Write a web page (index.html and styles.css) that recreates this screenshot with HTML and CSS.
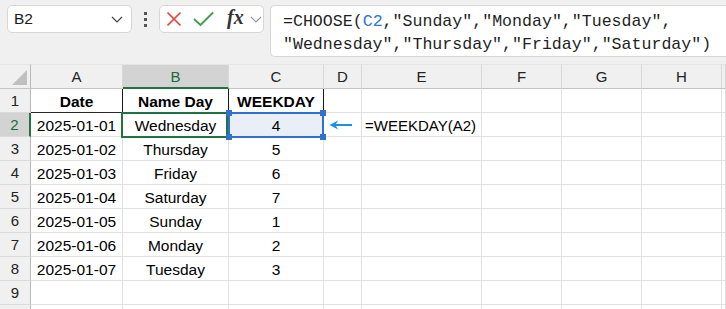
FILE: index.html
```html
<!DOCTYPE html>
<html lang="en">
<head>
  <meta charset="UTF-8">
  <title>CHOOSE weekday</title>
  <link rel="stylesheet" href="styles.css">
</head>
<body>
  <div class="toolbar">
    <div class="namebox">
      <span>B2</span>
      <svg class="chev" width="12" height="7" viewBox="0 0 12 7"><polyline points="1,1 6,6 11,1" fill="none" stroke="#444" stroke-width="1.2"/></svg>
    </div>
    <div class="dots"><i></i><i></i><i></i></div>
    <div class="fxbox">
      <svg width="16" height="16" viewBox="0 0 16 16"><path d="M1.5 1.5 L14.5 14.5 M14.5 1.5 L1.5 14.5" stroke="#e8413a" stroke-width="1.7" fill="none"/></svg>
      <svg width="21" height="16" viewBox="0 0 21 16"><polyline points="1,8 7.5,14 20,1.5" stroke="#3a9d4f" stroke-width="1.8" fill="none"/></svg>
      <span class="fx">fx</span>
      <svg width="12" height="7" viewBox="0 0 12 7"><polyline points="1,1 6,6 11,1" fill="none" stroke="#9a9a9a" stroke-width="1.2"/></svg>
    </div>
    <div class="formula">=CHOOSE(<span class="ref">C2</span>,"Sunday","Monday","Tuesday",<br>"Wednesday","Thursday","Friday","Saturday")</div>
  </div>

  <div class="sheet">
    <div class="grid">
      <div class="hd corner"><span class="tri"></span></div>
      <div class="hd">A</div>
      <div class="hd sel">B</div>
      <div class="hd">C</div>
      <div class="hd">D</div>
      <div class="hd">E</div>
      <div class="hd">F</div>
      <div class="hd">G</div>
      <div class="hd">H</div>
      <div class="hd"></div>

      <div class="rh">1</div>
      <div class="c th">Date</div>
      <div class="c th">Name Day</div>
      <div class="c th">WEEKDAY</div>
      <div class="c"></div><div class="c"></div><div class="c"></div><div class="c"></div><div class="c"></div><div class="c"></div>

      <div class="rh sel">2</div>
      <div class="c">2025-01-01</div>
      <div class="c">Wednesday</div>
      <div class="c range">4</div>
      <div class="c arrow">
        <svg width="24" height="12" viewBox="0 0 24 12"><path d="M0.5 6 L9 1.5 L7 5 L23 5 L23 7 L7 7 L9 10.5 Z" fill="#1b8fe6"/></svg>
      </div>
      <div class="c note">=WEEKDAY(A2)</div>
      <div class="c"></div><div class="c"></div><div class="c"></div><div class="c"></div>

      <div class="rh">3</div>
      <div class="c">2025-01-02</div><div class="c">Thursday</div><div class="c">5</div>
      <div class="c"></div><div class="c"></div><div class="c"></div><div class="c"></div><div class="c"></div><div class="c"></div>

      <div class="rh">4</div>
      <div class="c">2025-01-03</div><div class="c">Friday</div><div class="c">6</div>
      <div class="c"></div><div class="c"></div><div class="c"></div><div class="c"></div><div class="c"></div><div class="c"></div>

      <div class="rh">5</div>
      <div class="c">2025-01-04</div><div class="c">Saturday</div><div class="c">7</div>
      <div class="c"></div><div class="c"></div><div class="c"></div><div class="c"></div><div class="c"></div><div class="c"></div>

      <div class="rh">6</div>
      <div class="c">2025-01-05</div><div class="c">Sunday</div><div class="c">1</div>
      <div class="c"></div><div class="c"></div><div class="c"></div><div class="c"></div><div class="c"></div><div class="c"></div>

      <div class="rh">7</div>
      <div class="c">2025-01-06</div><div class="c">Monday</div><div class="c">2</div>
      <div class="c"></div><div class="c"></div><div class="c"></div><div class="c"></div><div class="c"></div><div class="c"></div>

      <div class="rh">8</div>
      <div class="c">2025-01-07</div><div class="c">Tuesday</div><div class="c">3</div>
      <div class="c"></div><div class="c"></div><div class="c"></div><div class="c"></div><div class="c"></div><div class="c"></div>

      <div class="rh">9</div>
      <div class="c"></div><div class="c"></div><div class="c"></div>
      <div class="c"></div><div class="c"></div><div class="c"></div><div class="c"></div><div class="c"></div><div class="c"></div>

      <div class="rh"></div>
      <div class="c"></div><div class="c"></div><div class="c"></div>
      <div class="c"></div><div class="c"></div><div class="c"></div><div class="c"></div><div class="c"></div><div class="c"></div>
    </div>

    <!-- active cell and the referenced range sit over the grid -->
    <div class="active-cell"></div>
    <div class="ref-box">
      <i class="h tl"></i><i class="h tr"></i><i class="h bl"></i><i class="h br"></i>
    </div>
  </div>
</body>
</html>
```

FILE: styles.css
```css
html, body {
  margin: 0;
  padding: 0;
  background: #f0f0f0;
  font-family: 'Liberation Sans', Arial, sans-serif;
  color: #000;
  overflow: hidden;
}

.toolbar {
  height: 64px;
  display: flex;
  align-items: flex-start;
  padding: 5px 0 0 7px;
  box-sizing: border-box;
}

.namebox {
  width: 125px;
  height: 28px;
  box-sizing: border-box;
  background: #fff;
  border: 1px solid #d6d6d6;
  border-radius: 5px;
  display: flex;
  align-items: center;
  justify-content: space-between;
  padding: 0 8px 0 6px;
  font-size: 15.5px;
  color: #1a1a1a;
}

.dots {
  width: 27px;
  height: 28px;
  display: flex;
  flex-direction: column;
  align-items: center;
  justify-content: center;
  gap: 3px;
}
.dots i {
  width: 3px;
  height: 3px;
  background: #555;
}

.fxbox {
  width: 105px;
  height: 28px;
  box-sizing: border-box;
  background: #fff;
  border: 1px solid #d6d6d6;
  border-radius: 5px;
  display: flex;
  align-items: center;
  padding: 0 0 0 6px;
  gap: 11px;
}
.fxbox .fx {
  font-family: 'Liberation Serif', 'DejaVu Serif', serif;
  font-style: italic;
  font-weight: bold;
  font-size: 20px;
  color: #333;
  margin: -3px -5px 0 2px;
}

.formula {
  margin-left: 6px;
  flex: 1;
  height: 52px;
  box-sizing: border-box;
  background: #fff;
  border: 1px solid #d6d6d6;
  border-right: none;
  border-radius: 5px 0 0 5px;
  padding: 4px 0 0 12px;
  font-family: 'Liberation Mono', 'DejaVu Sans Mono', monospace;
  font-size: 16.6px;
  line-height: 23px;
  color: #1f1f1f;
  white-space: nowrap;
}
.formula .ref {
  color: #2c74d6;
}

.sheet {
  position: relative;
  background: #fff;
}

.grid {
  display: grid;
  grid-template-columns: 31px 92px 106px 95px 38px 120px 80px 80px 80px 1fr;
  grid-template-rows: 25px repeat(10, 24px);
}

.hd {
  background: #f0f0f0;
  border-top: 1px solid #e4e4e4;
  border-right: 1px solid #d8d8d8;
  border-bottom: 1px solid #c4c4c4;
  box-sizing: border-box;
  text-align: center;
  font-size: 15px;
  line-height: 23px;
  color: #222;
}
.hd.sel {
  background: #d3d3d3;
  color: #176c3c;
  border-bottom: 2px solid #217346;
}
.corner {
  position: relative;
  border-right-color: #b9b9b9;
}
.corner .tri {
  position: absolute;
  right: 3px;
  bottom: 3px;
  width: 0;
  height: 0;
  border-left: 15px solid transparent;
  border-bottom: 15px solid #c0c0c0;
}

.rh {
  background: #f0f0f0;
  border-right: 1px solid #b9b9b9;
  border-bottom: 1px solid #dadada;
  box-sizing: border-box;
  text-align: center;
  font-size: 15px;
  line-height: 24px;
  color: #222;
}
.rh.sel {
  background: #d3d3d3;
  color: #176c3c;
  border-right: 2px solid #217346;
}

.c {
  border-right: 1px solid #e1e1e1;
  border-bottom: 1px solid #e1e1e1;
  box-sizing: border-box;
  text-align: center;
  font-size: 15.5px;
  line-height: 21px;
  padding-top: 2px;
  white-space: nowrap;
  overflow: hidden;
}
.c.th {
  font-weight: bold;
  border-right-color: #1a1a1a;
  border-bottom-color: #2a2a2a;
}
.c.range {
  background: #e9eef7;
}
.c.arrow {
  display: flex;
  align-items: center;
  justify-content: flex-start;
  padding: 0 0 0 5px;
}
.c.note {
  text-align: left;
  padding-left: 3px;
  font-size: 15px;
  overflow: visible;
}

.active-cell {
  position: absolute;
  left: 121px;
  top: 48px;
  width: 107px;
  height: 26px;
  box-sizing: border-box;
  border: 2px solid #217346;
}

.ref-box {
  position: absolute;
  left: 228px;
  top: 48px;
  width: 96px;
  height: 26px;
  box-sizing: border-box;
  border: 2px solid #3071d0;
}
.ref-box .h {
  position: absolute;
  width: 6px;
  height: 6px;
  background: #3071d0;
}
.ref-box .tl { left: -4px; top: -4px; }
.ref-box .tr { right: -4px; top: -4px; }
.ref-box .bl { left: -4px; bottom: -4px; }
.ref-box .br { right: -4px; bottom: -4px; }
```
